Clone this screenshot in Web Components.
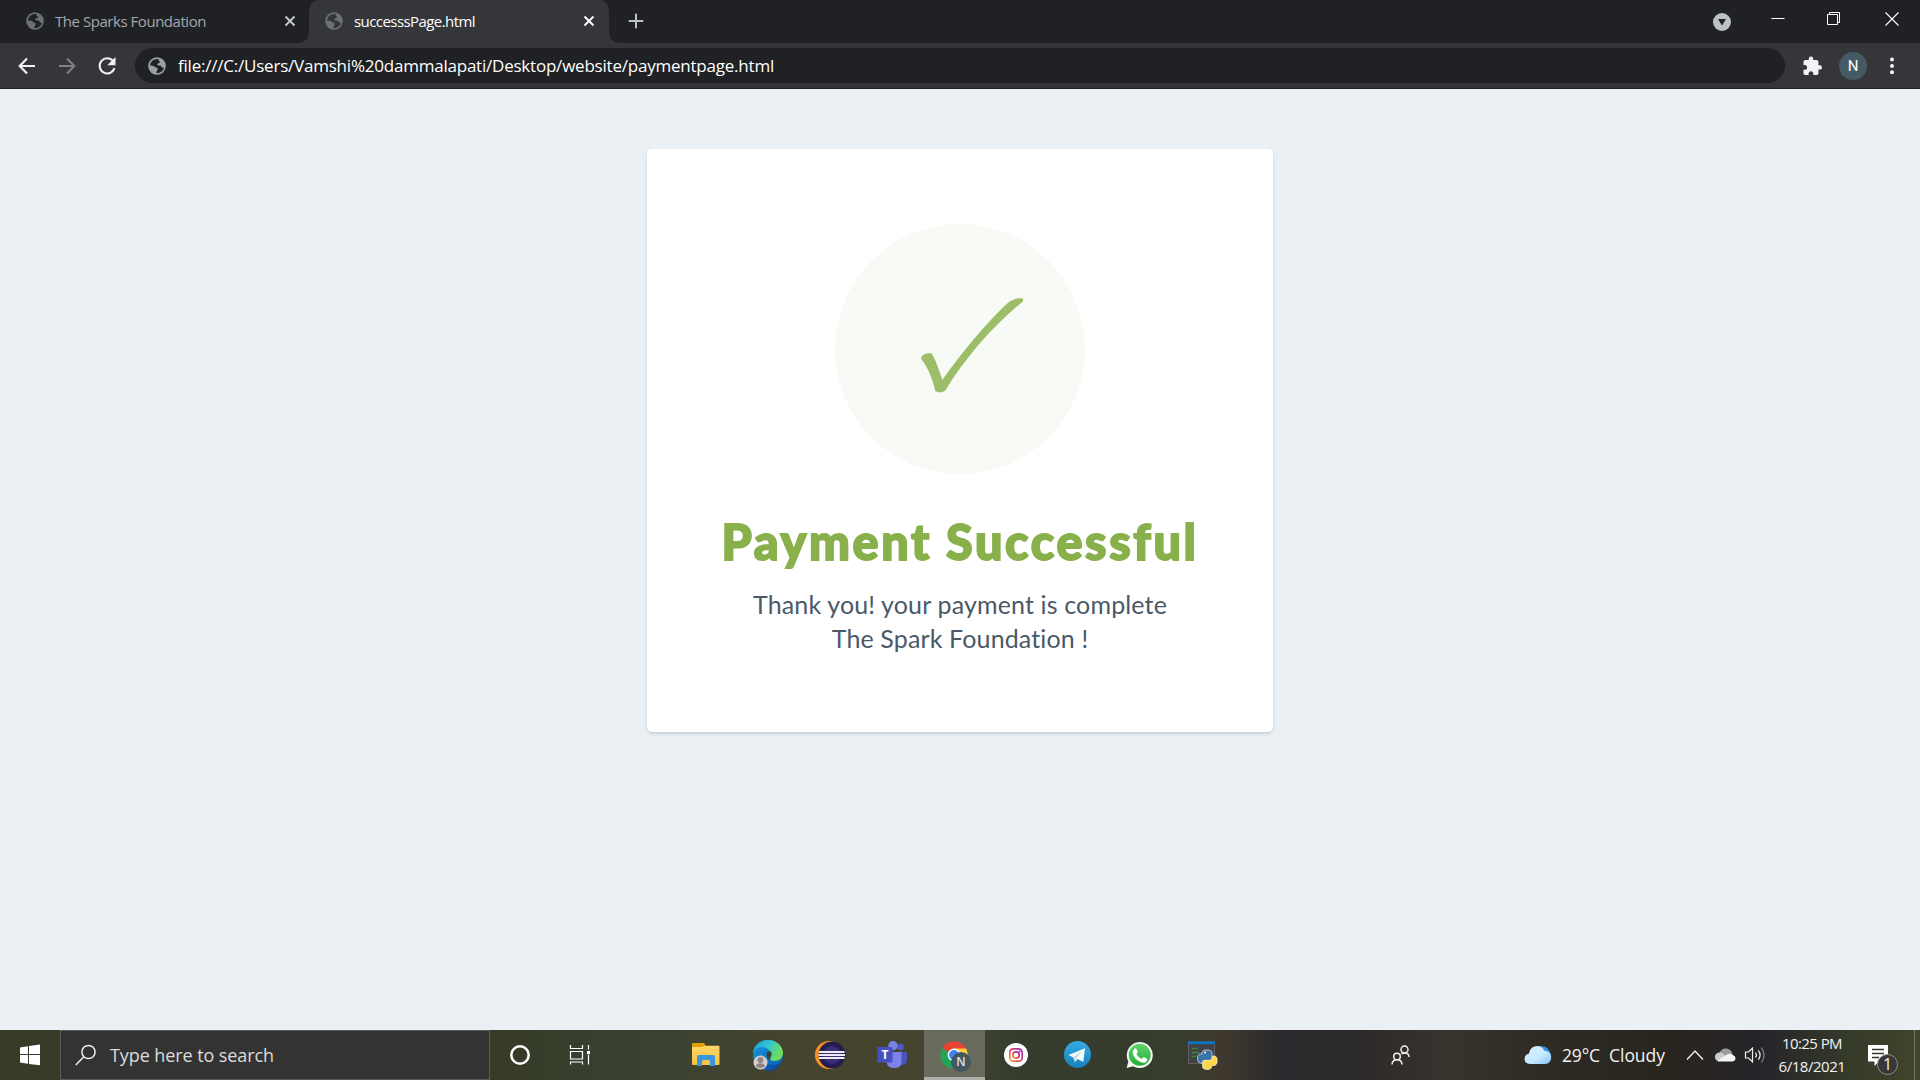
<!DOCTYPE html>
<html lang="en">
<head>
<meta charset="utf-8">
<title>successsPage.html</title>
<style>
html,body{margin:0;padding:0;overflow:hidden}
body{font-family:"Open Sans","Noto Sans",sans-serif;background:#ebf0f5}
</style>
</head>
<body>
<desktop-screen></desktop-screen>
<script>
const icons = {
  globe: [18,18,`<circle cx="9" cy="9" r="8.8" fill="currentColor"/><path d="M7.6 2.3C4.200 3 2.100 5.600 2 8.600c1.200-.2 2.600.1 3.700.4 1.200.3 1 1.300 2.100 1.500 1.400.2 2.200.8 1.900 2-.3 1.200-1.200 1.500-1.200 2.600v1.100c3.800.1 6.800-2.300 7.500-5.700-1.300.5-2.200-.2-2.600-1.100-.4-1-1.800-.7-2.900-.8-1.200-.2-1.700-1.300-.8-2.100.9-.6 2.100-.3 2.300-1.300.2-.9-1.100-1-1.500-1.800-.2-.4.1-.8.300-1.300-1.200-.2-2.200-.1-3.200.2z" fill="var(--cut,#202124)"/>`],
  x: [12,12,`<path d="M1.500 1.500l9 9M10.500 1.500l-9 9" stroke="currentColor" stroke-width="1.900"/>`],
  plus: [16,16,`<path d="M8 .7v14.600M.7 8h14.600" stroke="#bdc1c6" stroke-width="2"/>`],
  back: [18,18,`<path d="M17 9H2M9 1.500L1.700 9 9 16.500" fill="none" stroke="currentColor" stroke-width="2.100"/>`],
  reload: [20,20,`<path d="M16.300 5.200A7.600 7.600 0 1 0 17.500 12.200" fill="none" stroke="#eef0f2" stroke-width="2.100"/><path d="M18.500 1v8.200h-8.200z" fill="#eef0f2"/>`],
  drop: [18,18,`<circle cx="9" cy="9" r="9" fill="#bdc1c6"/><path d="M5 6h8l-4 6.500z" fill="#202124"/>`],
  min: [14,14,`<path d="M.5 6.500h13" stroke="#fff"/>`],
  restore: [14,14,`<path d="M.5 2.500h10v10H.500zM2.500 2.500v-2h10v10h-2" fill="none" stroke="#fff"/>`],
  close: [14,14,`<path d="M.5.500l13 13M13.500.500l-13 13" stroke="#fff" stroke-width="1.100"/>`],
  puzzle: [22,22,`<path d="M20.500 11H19V7c0-1.100-.9-2-2-2h-4V3.500a2.500 2.500 0 0 0-5 0V5H4c-1.100 0-1.990.9-1.990 2v3.800H3.500c1.490 0 2.700 1.210 2.700 2.700s-1.210 2.700-2.700 2.700H2V20c0 1.100.9 2 2 2h3.800v-1.500c0-1.490 1.210-2.700 2.700-2.700s2.700 1.210 2.700 2.700V22H17c1.100 0 2-.9 2-2v-4h1.500a2.500 2.500 0 0 0 0-5z" transform="scale(.88)translate(.8 .6)" fill="#f1f3f4"/>`],
  dots: [6,18,`<g fill="#f1f3f4"><circle cx="3" cy="2.500" r="2"/><circle cx="3" cy="9" r="2"/><circle cx="3" cy="15.200" r="2"/></g>`],
  check: [250,250,`<path d="M86.200 135C86 130 92 128.800 96.500 129.300C101 136 104 147 107.500 155.800C127 128 153 97 174.500 77.500C179 74.500 184 74 187.300 74.300C188.700 75.300 188.500 76.500 187.300 78C157 103 131 133 110.300 166.500C108 168.500 102.500 169 100.300 167C98 155 92 142 86.200 135Z" fill="#9cbe68"/>`],
  start: [61,50,`<path d="M20 17.500L28 16.200V24H20zM29 16L40 14.500V24H29zM20 25H28V33.800L20 32.500zM29 25H40V35.300L29 34z" fill="#fff"/>`],
  search: [22,22,`<circle cx="13.500" cy="8" r="6.600" fill="none" stroke="#eee" stroke-width="1.500"/><path d="M8.800 12.800L.8 21" stroke="#eee" stroke-width="1.500"/>`],
  cortana: [61,50,`<circle cx="30" cy="25" r="8.700" fill="none" stroke="#fff" stroke-width="2.500"/>`],
  taskview: [61,50,`<path d="M20.500 15v3.500h12V15M20.500 21.500h12v7.500h-12zM20.500 34.500V32h12v2.500M38.500 15v4.500M38.500 25v9.500" fill="none" stroke="#fff" stroke-width="1.200"/><path d="M37 21h3v3.200h-3z" fill="#fff"/>`],
  explorer: [61,50,`<defs><linearGradient id="a" x2="0" y2="1"><stop stop-color="#ffd868"/><stop offset="1" stop-color="#f7c23f"/></linearGradient></defs><path d="M16 14q0-1 1-1h11l2 3-2 2H16z" fill="#dea000"/><path d="M16 17h10l2.500-1.300h14q1 0 1 1V34q0 1-1 1H17q-1 0-1-1z" fill="url(#a)"/><path d="M21 36v-9q0-2 2-2h14q2 0 2 2v9h-5v-4.500q0-1.500-1.500-1.500h-5Q26 30 26 31.500V36z" fill="#3a95dd"/>`],
  edge: [61,50,`<defs><linearGradient id="e" x1="0" x2="1" y1="0" y2=".35"><stop stop-color="#159bdc"/><stop offset=".55" stop-color="#35c6ce"/><stop offset="1" stop-color="#70df58"/></linearGradient><linearGradient id="f" x2="1" y2="1"><stop stop-color="#189add"/><stop offset="1" stop-color="#0959b4"/></linearGradient></defs><circle cx="30" cy="25" r="15" fill="url(#f)"/><path d="M15 23C16 14.500 22 10 30 10c9 0 15 6.500 15 13 0 5-4 8-8.500 8-3.500 0-4.500-1.200-4.500-2 0-1 1.300-1.300 1.300-4C33.300 21 29 17 24 17c-4 0-7 2.200-9 6z" fill="url(#e)"/><path d="M26 22c-3 8 4 16 14 12l4-3q1.500 1-.2 3L44 42 28 41Q24 34 26 22z" fill="#0c469f" opacity=".55"/><path d="M43.500 31l3 1.500L43 43H34c4-2 7.500-6.500 9.500-12z" fill="#46452f"/><path d="M29 22.500q1-1.500 3-1.200c2.200 1 2 4 0 6.500q-.6 1.500.7 3Q27 28 29 22.500z" fill="#37442f"/><circle cx="22.500" cy="32.500" r="7" fill="#d3cfcc"/><circle cx="22.500" cy="30" r="3" fill="#8c8783"/><path d="M18 36.500q0-3.200 4.500-3.200t4.500 3.200q-4.500 3-9 0z" fill="#8c8783"/>`],
  eclipse: [61,50,`<circle cx="29" cy="25" r="14" fill="#f7941e"/><circle cx="32" cy="25" r="13.500" fill="#251d4f"/><circle cx="32" cy="25" r="9" fill="#392e77"/><path d="M19 22h25.500M18.500 25h26.500M19 28h25.500" stroke="#eeeaf6" stroke-width="2"/>`],
  teams: [61,50,`<circle cx="38.500" cy="17" r="3.300" fill="#5059c9"/><path d="M34 22h10q1 0 1 1v7q0 5-5 5h-5z" fill="#4b53bc"/><circle cx="31" cy="15.700" r="4.700" fill="#7b83eb"/><path d="M25 22h14.500v10q0 6-7.500 6-6.500 0-7.500-6z" fill="#7b83eb"/><rect x="15.500" y="17" width="15" height="15.500" rx="1.300" fill="#4750c0"/><text x="23" y="29" text-anchor="middle" font-size="12" font-weight="700" fill="#fff" font-family="Open Sans">T</text>`],
  chrome: [61,50,`<circle cx="30" cy="25" r="13.700" fill="#e94335"/><path d="M30 25L18 18.300A13.700 13.700 0 0 0 30 38.700z" fill="#1da65a"/><path d="M30 25V38.700A13.700 13.700 0 0 0 42 18.500H30z" fill="#ffcd40"/><circle cx="30" cy="25" r="6.400" fill="#fff"/><circle cx="30" cy="25" r="5" fill="#4285f4"/><circle cx="37" cy="32" r="10" fill="#435762"/><text x="37" y="36.300" text-anchor="middle" font-size="12" font-weight="600" fill="#dce2e4" font-family="Open Sans">N</text>`],
  instagram: [61,50,`<defs><linearGradient id="i" x1="0" y1="1" x2="1" y2="0"><stop stop-color="#f7a33a"/><stop offset=".5" stop-color="#e23769"/><stop offset="1" stop-color="#9132b6"/></linearGradient></defs><circle cx="30" cy="25" r="12" fill="#fff"/><g fill="none" stroke="url(#i)" stroke-width="1.700"><rect x="23.800" y="18.800" width="12.400" height="12.400" rx="3.500"/><circle cx="30" cy="25" r="3.200"/></g><circle cx="33.700" cy="21.400" r="1" fill="#ab359c"/>`],
  telegram: [61,50,`<defs><linearGradient id="t" x2="0" y2="1"><stop stop-color="#35abe3"/><stop offset="1" stop-color="#1681bd"/></linearGradient></defs><circle cx="29.500" cy="24.500" r="13.500" fill="url(#t)"/><path d="M20.500 25L37 18.300 35.300 32 29.500 29 27 32 25.300 27.500z" fill="#f5f9fb"/><path d="M25.300 27.500L35 20.500 27.700 28.400 27 32z" fill="#bdd6e4"/>`],
  whatsapp: [61,50,`<defs><linearGradient id="w" x2="0" y2="1"><stop stop-color="#61d36a"/><stop offset="1" stop-color="#20b038"/></linearGradient></defs><path d="M16.600 38l1.800-6.600A13 13 0 1 1 23 36.200z" fill="#f6f8f4"/><circle cx="29.700" cy="24.700" r="11" fill="url(#w)"/><path d="M24.600 18.500q1.200-.5 1.800.2l1.500 3.300-1.500 2q1.800 3.700 5.300 5l2-2 3.500 1.800q.3 2.700-2 3.700-2.500 1-6.500-1.500-5-3-6-8-.3-3 1.900-4.500z" fill="#fff"/>`],
  python: [61,50,`<path d="M16.500 12h26v21.500h-26z" fill="#414245" stroke="#5c6064"/><path d="M16 11.500h27v2.600H16z" fill="#0876c8"/><path d="M19.500 18.500h6M19.500 22.500h8M19.500 26.500h5" stroke="#338a36" stroke-width="1.300"/><path d="M30 24v-1.500q0-2.500 5-2.500t5 2.500v6q0 2-2 2h-5q-2.500 0-2.500 2.700h-2q-3-.5-3-4.600 0-4.600 3-4.600z" fill="#3874a7" stroke="#e8edf0" stroke-width=".7"/><path d="M40.500 26H43q2.200.6 2.200 4.500 0 4.500-2.500 5h-3v1q0 3-4.500 3t-4.700-3v-4q0-2.200 2.200-2.200h5q2.500 0 2.500-2.500z" fill="#ffd84a" stroke="#f4efdf" stroke-width=".7"/><circle cx="33" cy="22.500" r="1" fill="#fff"/>`],
  people: [20,20,`<g fill="none" stroke="#eee" stroke-width="1.500"><circle cx="13.500" cy="4.500" r="3.500"/><path d="M18.200 12q-.3-4-4.700-4-2 0-3 1"/><circle cx="6" cy="11.500" r="3.300"/><path d="M1 19.500q.3-4.700 5-4.700t5 4.700"/></g>`],
  cloud: [28,20,`<defs><linearGradient id="c" x2="1" y2="1"><stop stop-color="#d5f0ff"/><stop offset=".55" stop-color="#c9eaff"/><stop offset="1" stop-color="#86c6f4"/></linearGradient></defs><path d="M14 2Q22-.5 25.500 6 29 12 26 16z" fill="#358bdc"/><path d="M6 19Q.5 18.500.5 14 .5 9.500 5 8.500 6 1 13.500 1q5 0 6.500 4.500 7 .5 7 7 0 6.500-6 6.500z" fill="url(#c)"/>`],
  up: [18,12,`<path d="M1 10.500L9 2l8 8.500" fill="none" stroke="#eee" stroke-width="1.500"/>`],
  onedrive: [22,14,`<path d="M5 6Q7 0 12.500.500q4 .5 6 5L8 11z" fill="#9e9c9d"/><path d="M1 9q0-5 6-4.500l9 6L14 13H4Q1 12 1 9z" fill="#ccc"/><path d="M3.500 13Q8 9 13 6.800q3-2.300 6 .2 2.700 1 2.500 3.500-.4 3-3.500 3H4z" fill="#f5f5f5"/>`],
  volume: [22,18,`<g fill="none" stroke="#eee" stroke-width="1.200"><path d="M1.500 6h3l4-3.800v13.600l-4-3.800h-3z"/><path d="M11.500 6.500q2 2.500 0 5"/><path d="M14.300 4.300q3.600 4.700 0 9.400"/><path d="M17.300 1.500q5.500 7.500 0 15" opacity=".5"/></g>`],
  note: [34,36,`<path d="M1 2h20v16.500h-9L7.500 23v-4.500H1z" fill="#fff"/><path d="M5 6.500h12M5 10.500h12M5 14.500h7" stroke="#34362c" stroke-width="1.300"/>`]
};
const define = (name, html, setup) => {
  const tpl = document.createElement('template');
  tpl.innerHTML = html;
  customElements.define(name, class extends HTMLElement {
    connectedCallback() {
      if (this.shadowRoot) return;
      this.attachShadow({ mode: 'open' }).append(tpl.content.cloneNode(true));
      if (setup) setup(this);
    }
  });
};

define('ui-icon', `<style>:host{display:block;flex:none}svg{display:block}</style>`, el => {
  const [w, h, body] = icons[el.getAttribute('name')];
  el.shadowRoot.innerHTML += `<svg width="${w}" height="${h}" viewBox="0 0 ${w} ${h}">${body}</svg>`;
});

define('browser-tab', `<style>
:host{display:flex;align-items:center;box-sizing:border-box;width:300px;height:43px;padding:0 13px 2px 17px;color:#a3a7ac;font-size:15px;line-height:22px;position:relative}
:host([active]){padding:0 14px 2px 16px;background:#35363a;border-radius:10px 10px 0 0;color:#fff;--cut:#35363a}
:host([active])::before,:host([active])::after{content:"";position:absolute;bottom:0;width:10px;height:10px}
:host([active])::before{left:-10px;background:radial-gradient(circle at 0 0,#202124 9.500px,#35363a 10px)}
:host([active])::after{right:-10px;background:radial-gradient(circle at 100% 0,#202124 9.500px,#35363a 10px)}
.fav{color:#6d7175;margin-right:11px}.x{margin-left:auto;color:#c4c7cb}:host([active]) .x{color:#fff}
</style><ui-icon class="fav" name="globe"></ui-icon><slot></slot><ui-icon class="x" name="x"></ui-icon>`);

define('tab-strip', `<style>
:host{display:flex;align-items:center;height:43px;background:#202124;padding-left:9px}
.plus{margin-left:19px;margin-bottom:2px}
.win{margin-left:auto;align-self:flex-start;display:flex;align-items:center;padding-right:21px;height:37px}
.drop{margin:7px 40px 0 0}.gap{margin-right:42px}.gap2{margin-right:44px}
</style>
<browser-tab><fit-text w="151">The Sparks Foundation</fit-text></browser-tab>
<browser-tab active><fit-text w="121">successsPage.html</fit-text></browser-tab>
<ui-icon class="plus" name="plus"></ui-icon>
<div class="win"><ui-icon class="drop" name="drop"></ui-icon><ui-icon class="gap" name="min"></ui-icon><ui-icon class="gap2" name="restore"></ui-icon><ui-icon name="close"></ui-icon></div>`);

define('tool-bar', `<style>
:host{display:flex;align-items:center;height:46px;box-sizing:border-box;background:#35363a;border-bottom:1px solid #242528;padding:0 25px 0 18px;color:#f1f3f4}
.fwd{transform:scaleX(-1);color:#7d7f83;margin:0 21px 0 22px}
.url{flex:1;display:flex;align-items:center;height:35px;border-radius:18px;background:#202124;margin:0 16px 0 18px;padding-left:13px;font-size:17px;line-height:24px;color:#fff;gap:12px}
.url ui-icon{color:#9aa0a6}
.n{width:28px;height:28px;border-radius:50%;background:#455a64;color:#fff;font:400 15px/28px Roboto,sans-serif;text-align:center;margin:0 22px 0 16px}
</style>
<ui-icon name="back"></ui-icon><ui-icon class="fwd" name="back"></ui-icon><ui-icon name="reload"></ui-icon>
<div class="url"><ui-icon name="globe"></ui-icon><fit-text w="596">file:///C:/Users/Vamshi%20dammalapati/Desktop/website/paymentpage.html</fit-text></div>
<ui-icon name="puzzle"></ui-icon><div class="n">N</div><ui-icon name="dots"></ui-icon>`);

define('payment-card', `<style>
:host{display:flex;flex-direction:column;align-items:center;box-sizing:border-box;width:626px;height:583px;padding-top:75px;background:#fff;border-radius:5px;box-shadow:0 2px 3px #c8d0d8;font-family:Lato,"Open Sans",sans-serif}
.disc{width:250px;height:250px;border-radius:50%;background:#f8faf5}
h1{margin:33px 0 12px;font-size:48.500px;line-height:68px;font-weight:900;color:#88b04b;-webkit-text-stroke:1.800px #88b04b}
p{margin:0;font-size:25px;line-height:34px;color:#4a5968;text-align:center}
</style><div class="disc"><ui-icon name="check"></ui-icon></div>
<h1><slot name="title"></slot></h1><p><slot></slot></p>`);

define('web-page', `<style>:host{display:flex;justify-content:center;align-items:flex-start;box-sizing:border-box;height:941px;padding-top:60px;background:#ebf0f5}</style>
<payment-card><fit-text slot="title" w="477">Payment Successful</fit-text><fit-text w="414">Thank you! your payment is complete</fit-text><br><fit-text w="257">The Spark Foundation !</fit-text></payment-card>`);

define('task-button', `<style>:host{display:block;width:61px;height:50px;box-sizing:border-box}:host([active]){background:linear-gradient(#b0b0aa,#b0b0aa) 0 100%/100% 3px no-repeat,#686b5b}</style><slot></slot>`);

define('task-bar', `<style>
:host{display:flex;height:50px;color:#f2f2f2;background:linear-gradient(90deg,#363c28 0,#363b28 500px,#3b4233 660px,#46442d 800px,#44442f 950px,#343c2d 1020px,#373d2d 1180px,#3e382f 1225px,#2c2a2e 1280px,#2c2a29 1360px,#39332d 1450px,#2d2923 1560px,#28251f 1665px,#272429 1760px,#353b29 1850px,#41452c 1920px)}
.search{width:430px;box-sizing:border-box;border:1px solid #5b5c59;background:#333;display:flex;align-items:center;padding-left:14px;gap:13px;font-size:18px;line-height:26px;color:#dcdcdc}
.start{width:60px}.cortana{width:60px}
.apps{display:flex;gap:1px;margin-left:65px}
.tray{display:flex;align-items:center;margin-left:auto;height:50px;font-size:17.500px;line-height:26px}
.clock{display:flex;flex-direction:column;align-items:center;width:68px;font-size:15px;line-height:23px;margin:0 21px 0 12px}
.note{position:relative;width:47px;height:36px;margin-top:11px}
.badge{position:absolute;left:10px;top:11px;width:21px;height:21px;box-sizing:border-box;border:1px solid #8d8e89;border-radius:50%;background:#373737;font-size:16px;line-height:19px;text-align:center}
.edge{width:5px;height:50px;border-left:1px solid #77796a}
</style>
<task-button class="start"><ui-icon name="start"></ui-icon></task-button>
<div class="search"><ui-icon name="search"></ui-icon><fit-text w="164">Type here to search</fit-text></div>
<task-button class="cortana"><ui-icon name="cortana"></ui-icon></task-button><task-button><ui-icon name="taskview"></ui-icon></task-button>
<div class="apps">
<task-button><ui-icon name="explorer"></ui-icon></task-button><task-button><ui-icon name="edge"></ui-icon></task-button><task-button><ui-icon name="eclipse"></ui-icon></task-button><task-button><ui-icon name="teams"></ui-icon></task-button><task-button active><ui-icon name="chrome"></ui-icon></task-button><task-button><ui-icon name="instagram"></ui-icon></task-button><task-button><ui-icon name="telegram"></ui-icon></task-button><task-button><ui-icon name="whatsapp"></ui-icon></task-button><task-button><ui-icon name="python"></ui-icon></task-button>
</div>
<div class="tray">
<ui-icon name="people" style="margin-right:113px"></ui-icon>
<ui-icon name="cloud" style="margin-right:10px"></ui-icon>
<fit-text w="38" style="margin-right:9px">29°C</fit-text><fit-text w="56">Cloudy</fit-text>
<ui-icon name="up" style="margin:0 10px 0 21px"></ui-icon><ui-icon name="onedrive" style="margin-right:8px"></ui-icon><ui-icon name="volume"></ui-icon>
<div class="clock"><fit-text w="60">10:25 PM</fit-text><fit-text w="67">6/18/2021</fit-text></div>
<div class="note"><ui-icon name="note"></ui-icon><div class="badge">1</div></div>
<div class="edge"></div>
</div>`);

define('desktop-screen', `<style>:host{display:flex;flex-direction:column;width:1920px;height:1080px}</style><tab-strip></tab-strip><tool-bar></tool-bar><web-page></web-page><task-bar></task-bar>`);

/* Tracks a line of text so that it spans the width given in its "w" attribute. */
define('fit-text', `<style>:host{display:inline-block;white-space:pre}</style><slot></slot>`, el => {
  const gap = +el.getAttribute('w') - el.getBoundingClientRect().width;
  el.style.letterSpacing = gap / el.textContent.length + 'px';
});
</script>
</body>
</html>
